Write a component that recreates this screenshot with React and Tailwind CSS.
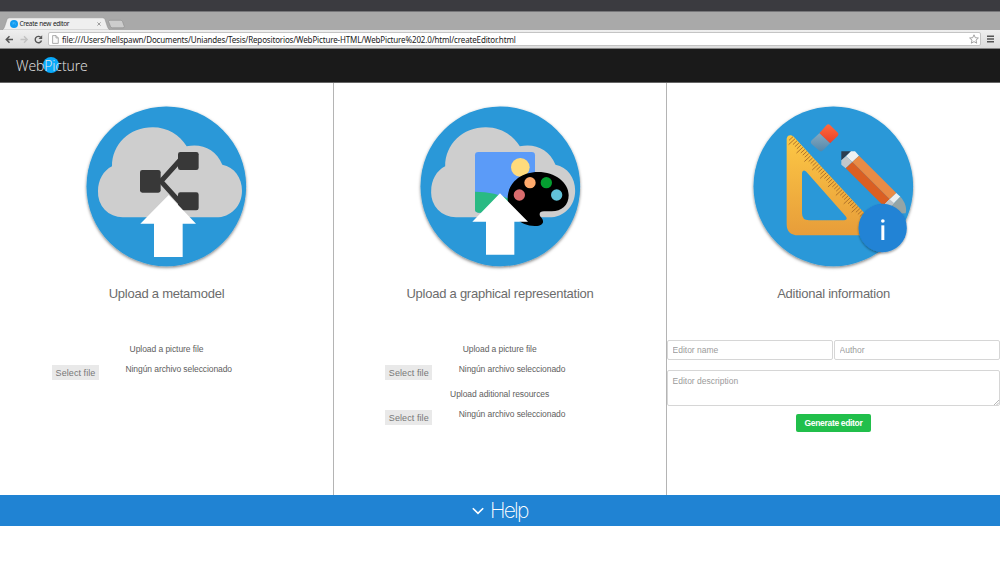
import React from "react";

function Cloud() {
  return (
    <path
      fill="#cecece"
      d="M140 364 A74 74 0 0 1 66 286 C66 252 82 224 108 211 C108 145 160 94 230 94 C275 94 311 117 332 151 C377 141 420 160 439 206 C475 213 498 245 498 284 C498 330 464 364 420 364 Z"
    />
  );
}

function Disc({ children, label, id }) {
  return (
    <svg className="ml-[76px] block h-[180px] w-[180px] overflow-visible" viewBox="0 0 540 540" role="img" aria-label={label}>
      <defs>
        <filter id={id} x="-10%" y="-10%" width="120%" height="120%">
          <feDropShadow dx="0" dy="4" stdDeviation="4" floodColor="#000" floodOpacity="0.5" />
        </filter>
      </defs>
      <circle cx="271" cy="271" r="239.500" fill="#2998d8" filter={`url(#${id})`} />
      {children}
    </svg>
  );
}

function MetamodelArt() {
  return (
    <Disc label="Upload a metamodel" id="s1">
      <Cloud />
      <path d="M318 186 L255 256 L322 330" fill="none" stroke="#383838" strokeWidth="15" />
      <g fill="#383838">
        <rect x="192" y="222" width="62" height="68" rx="7" />
        <rect x="306" y="168" width="62" height="54" rx="7" />
        <rect x="306" y="289" width="62" height="54" rx="7" />
      </g>
      <path d="M278 297 L360 383 H320 V483 H234 V383 H193 Z" fill="#fff" />
    </Disc>
  );
}

function GraphicArt() {
  return (
    <Disc label="Upload a graphical representation" id="s2">
      <g transform="translate(-2.500 0)">
        <Cloud />
      </g>
      <rect x="195" y="168" width="180" height="182" rx="10" fill="#5b9bf8" />
      <path d="M195 287 C240 287 280 298 310 316 L310 350 H205 Q195 350 195 340 Z" fill="#2aba83" />
      <circle cx="331" cy="214" r="28" fill="#ffdb7c" />
      <path d="M384 228 C435 228 476 259 476 298 C476 328 455 346 425 346 H402 C386 346 386 358 395 366 C405 378 397 391 374 390 C325 388 293 350 293 308 C293 260 333 228 384 228 Z" fill="#000" />
      <circle cx="360" cy="260" r="17" fill="#ffaa6c" />
      <circle cx="409" cy="260" r="17" fill="#049f30" />
      <circle cx="328" cy="297" r="17" fill="#d96c6d" />
      <circle cx="440" cy="297" r="17" fill="#62c1d8" />
      <path d="M270 292 L354 377 H313 V476 H228 V377 H187 Z" fill="#fff" />
    </Disc>
  );
}

const TICKS = Array.from({ length: 37 }, (_, i) => i);

function InfoArt() {
  return (
    <Disc label="Aditional information" id="s3">
      <defs>
        <linearGradient id="gold" x1="0" y1="0" x2="0" y2="1">
          <stop offset="0" stopColor="#fdc845" />
          <stop offset="1" stopColor="#e79d3a" />
        </linearGradient>
        <linearGradient id="red" x1="0" y1="0" x2="0" y2="1">
          <stop offset="0" stopColor="#ff6a3c" />
          <stop offset="1" stopColor="#e8402a" />
        </linearGradient>
        <linearGradient id="steel" x1="0" y1="0" x2="0" y2="1">
          <stop offset="0" stopColor="#86a9c0" />
          <stop offset="1" stopColor="#5488ab" />
        </linearGradient>
        <filter id="badge" x="-20%" y="-20%" width="140%" height="140%">
          <feDropShadow dx="0" dy="4" stdDeviation="3" floodColor="#000" floodOpacity="0.4" />
        </filter>
      </defs>
      <path
        fillRule="evenodd"
        fill="url(#gold)"
        d="M131 128 Q133 117 144 118 Q150 119 155 125 L405 395 Q408 418 390 418 H166 Q131 418 131 384 Z M177 231 V352 Q177 373 198 373 H304 Q316 371 308 361 L190 227 Q179 218 177 231 Z"
      />
      <g stroke="#b0722a" strokeWidth="3">
        {TICKS.map((i) => {
          const x = 150 + i * 5.9;
          const y = 122 + i * 6.35;
          const l = i % 4 === 1 ? 19 : 12;
          return <path key={i} d={`M${x} ${y} l${-l} ${l * 0.92}`} />;
        })}
      </g>
      <path d="M229 112 L251 87 Q256 82 261 87 L283 109 Q289 114 284 120 L261 142 Z" fill="url(#red)" />
      <path d="M229 112 L261 142 L241 162 Q234 170 227 163 L205 143 Q201 138 206 133 Z" fill="url(#steel)" />
      <path d="M295 166 H324 L295 193 Z" fill="#2c3e50" />
      <path d="M324 166 H336 L348 179 L328 198 L309 181 Z" fill="#edf1f2" />
      <path d="M309 181 L328 198 L308 217 L295 206 V193 Z" fill="#c2c8cc" />
      <path d="M348 179 L460 291 L440 310 L328 198 Z" fill="#e98b45" />
      <path d="M328 198 L440 310 L421 329 L308 217 Z" fill="#db5f22" />
      <path d="M460 291 L472 302 L434 341 L421 329 L440 310 Z" fill="#ecf0f1" />
      <path d="M440 310 L453 321 L434 341 L421 329 Z" fill="#bdc3c7" />
      <path d="M472 302 C487 318 492 337 488 352 L448 354 L434 341 Z" fill="#95a5a6" />
      <circle cx="419" cy="396" r="72.500" fill="#2083d5" filter="url(#badge)" />
      <circle cx="419.500" cy="375" r="5.500" fill="#fff" />
      <path d="M419.500 388 V432" stroke="#fff" strokeWidth="9" />
    </Disc>
  );
}

function BrowserChrome() {
  return (
    <header className="font-['Noto_Sans',sans-serif]">
      <div className="h-[11px] bg-[#3b3b40]" />
      <div className="h-px bg-[#77777a]" />
      <div className="flex h-[18px] items-end bg-[#a9a9a9]">
        <div className="relative flex h-[13px] w-[128px] items-center">
          <svg className="absolute inset-0 h-[13px] w-[128px]" viewBox="0 0 128 13">
            <path d="M108.500 4.500 Q108.500 3.300 110 3.300 H120.500 Q122 3.300 122.500 4.500 L124.300 9.500 Q124.500 10.800 123 10.800 H112.500 Q111 10.800 110.500 9.500 Z" fill="#cdcdcd" stroke="#8c8c8c" strokeWidth="0.600" />
            <path d="M2 13 Q3.500 12.500 4.500 10 L7 2.500 Q7.500 0.800 9.500 0.800 H102.500 Q104.500 0.800 105 2.500 L107.500 10 Q108.500 12.500 110 13 Z" fill="#efefef" stroke="#8f8f8f" strokeWidth="0.500" />
          </svg>
          <span className="relative ml-[10px] flex h-[8px] w-[8px] shrink-0 items-center justify-center rounded-full bg-[#129bf0] text-[4px] leading-none text-[#62c8ff]">Pi</span>
          <span className="relative ml-[1.500px] whitespace-nowrap text-[6.500px] leading-[12px] tracking-[-0.330px] text-[#222] [word-spacing:0.500px]">Create new editor</span>
          <svg className="absolute left-[97px] top-[5px] h-[4px] w-[4px]" viewBox="0 0 4 4">
            <path d="M.4 .4 3.600 3.600M3.600 .4 .4 3.600" stroke="#888" strokeWidth="0.800" />
          </svg>
        </div>
      </div>
      <div className="flex h-[18px] items-center bg-linear-to-b from-[#efefef] to-[#dcdcdc]">
        <svg className="h-[18px] w-[48px] shrink-0" viewBox="0 0 48 18" fill="none">
          <path d="M13 9.500 H6.500 M9.500 6.300 L6.300 9.500 L9.500 12.700" stroke="#565656" strokeWidth="1.500" />
          <path d="M20.500 9.500 H27 M24 6.300 L27.200 9.500 L24 12.700" stroke="#c2c2c2" strokeWidth="1.400" />
          <path d="M40.700 7.300 A3.200 3.200 0 1 0 41.500 10.500" stroke="#565656" strokeWidth="1.400" />
          <path d="M42.200 5.300 V9 H38.500 Z" fill="#565656" />
        </svg>
        <div className="flex h-[14px] w-[933px] items-center rounded-[2px] border border-[#c4c4c4] bg-white">
          <svg className="ml-[3px] h-[9px] w-[7px] shrink-0" viewBox="0 0 7 9" fill="#fafafa" stroke="#999" strokeWidth="0.800">
            <path d="M.6 .6 H4 L6.300 2.900 V8.400 H.6 Z M4 .6 V2.900 H6.300" />
          </svg>
          <span className="ml-[3px] grow whitespace-nowrap pt-px text-[8px] leading-[12px] tracking-[-0.150px] text-[#222]">
            file:///Users/hellspawn/Documents/Uniandes/Tesis/Repositorios/WebPicture-HTML/WebPicture%202.0/html/createEditor.html
          </span>
          <svg className="mr-px h-[10px] w-[10px] shrink-0" viewBox="0 0 10 10" fill="none" stroke="#999" strokeWidth="0.900">
            <path d="M5 .8 6.300 3.700 9.400 4 7 6.100 7.700 9.200 5 7.600 2.300 9.200 3 6.100 .6 4 3.700 3.700Z" />
          </svg>
        </div>
        <svg className="ml-[6px] h-[8px] w-[7px]" viewBox="0 0 7 8" stroke="#555" strokeWidth="1.600">
          <path d="M0 1.200H7M0 4H7M0 6.800H7" />
        </svg>
      </div>
      <div className="h-px bg-[#858585]" />
    </header>
  );
}

function FileRow() {
  return (
    <div className="flex h-[20px] items-start">
      <button className="ml-[52px] mt-[1.500px] h-[15.500px] w-[47px] shrink-0 whitespace-nowrap bg-[#e9e9e9] text-[9px] leading-[16px] tracking-[0.080px] text-[#777]">Select file</button>
      <span className="ml-[26.500px] whitespace-nowrap text-[8.500px] leading-[12px] tracking-[-0.080px] text-[#606060]">Ningún archivo seleccionado</span>
    </div>
  );
}

function Title({ children }) {
  return <h2 className="mt-[8px] h-[20px] whitespace-nowrap text-center text-[13px] leading-[20px] tracking-[-0.240px] text-[#6c6c6c]">{children}</h2>;
}

function Label({ children }) {
  return <div className="h-[12px] whitespace-nowrap text-center text-[8.500px] leading-[12px] tracking-[-0.060px] text-[#606060]">{children}</div>;
}

export default function App() {
  return (
    <div className="flex h-[562px] w-[1000px] flex-col overflow-hidden bg-white font-['Liberation_Sans',Arial,sans-serif]">
      <BrowserChrome />
      <nav className="flex h-[34px] items-center border-b border-[#666] bg-[#1a1a1a] pl-[16px]">
        <div className="relative whitespace-nowrap text-[14px] font-light leading-[20px] text-[#e8e8e8] [font-family:'Open_Sans','Noto_Sans',sans-serif]">
          <span className="absolute left-[27px] top-[1.500px] h-[16px] w-[16px] rounded-full bg-[#08a9fb]" />
          <span className="relative tracking-[-0.100px]">WebPicture</span>
        </div>
      </nav>
      <main className="flex h-[412px]">
        <section className="w-[334px] border-r border-[#b4b4b4] pt-[13px]">
          <MetamodelArt />
          <Title>Upload a metamodel</Title>
          <div className="pt-[39px]"><Label>Upload a picture file</Label></div>
          <div className="pt-[8px]"><FileRow /></div>
        </section>
        <section className="w-[333px] border-r border-[#b4b4b4] pt-[13px]">
          <GraphicArt />
          <Title>Upload a graphical representation</Title>
          <div className="-ml-[0.700px] flex flex-col pt-[39px]">
            <Label>Upload a picture file</Label>
            <div className="pt-[8px]"><FileRow /></div>
            <div className="pt-[5px]"><Label>Upload aditional resources</Label></div>
            <div className="pt-[8px]"><FileRow /></div>
          </div>
        </section>
        <section className="w-[333px] pt-[13px]">
          <InfoArt />
          <Title>Aditional information</Title>
          <form className="mt-[36px] text-[8.500px]">
            <div className="flex gap-px">
              <input className="h-[20px] w-[166px] rounded-[2px] border border-[#d6d6d6] px-[4.500px] pb-px placeholder:text-[#9b9b9b]" placeholder="Editor name" />
              <input className="h-[20px] w-[166px] rounded-[2px] border border-[#d6d6d6] px-[4.500px] pb-px placeholder:text-[#9b9b9b]" placeholder="Author" />
            </div>
            <div className="relative mt-[10px] h-[36px]">
              <textarea className="block h-[36px] w-[333px] resize-none rounded-[2px] border border-[#d6d6d6] px-[4.500px] py-[4px] leading-[12px] placeholder:text-[#9b9b9b]" placeholder="Editor description" />
              <svg className="absolute bottom-px right-px h-[5px] w-[5px]" viewBox="0 0 5 5" stroke="#999" strokeWidth="0.700">
                <path d="M0 5 5 0M2.500 5 5 2.500" />
              </svg>
            </div>
            <button type="button" className="ml-[129px] mt-[8px] block h-[18px] w-[75px] whitespace-nowrap rounded-[2px] bg-[#21bf4b] text-[8.500px] font-bold leading-[18px] tracking-[-0.330px] text-white">Generate editor</button>
          </form>
        </section>
      </main>
      <footer className="flex h-[31px] items-center bg-[#2083d3] pl-[472px] text-white">
        <svg className="h-[8px] w-[12px]" viewBox="0 0 12 8" fill="none" stroke="#fff" strokeWidth="1.600">
          <path d="M.8 1.200 6 6.300 11.200 1.200" />
        </svg>
        <span className="ml-[6px] text-[21px] font-extralight leading-[30px] tracking-[-1.800px] [font-family:Inter,sans-serif]">Help</span>
      </footer>
    </div>
  );
}
